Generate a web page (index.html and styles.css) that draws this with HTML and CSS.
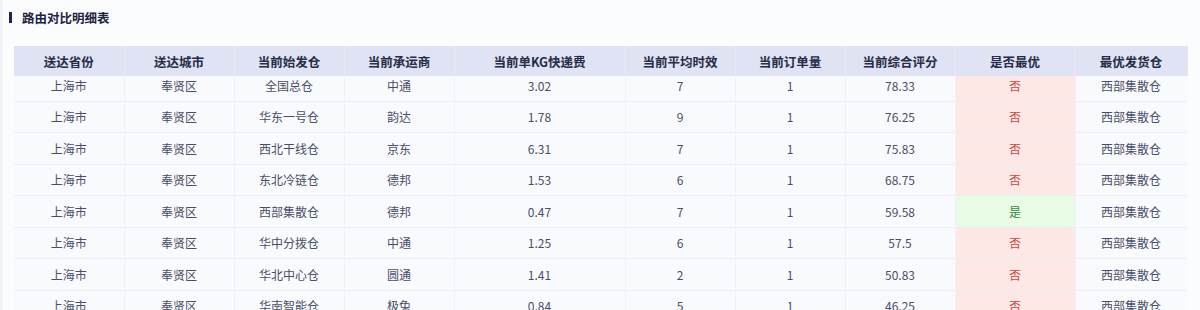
FILE: index.html
```html
<!DOCTYPE html>
<html lang="zh">
<head>
<meta charset="utf-8">
<title>路由对比明细表</title>
<link rel="stylesheet" href="styles.css">
</head>
<body>
<div class="card">
  <div class="title"><span class="title-bar"></span><span class="title-text">路由对比明细表</span></div>
  <div class="table-wrap">
    <table class="grid head">
      <colgroup>
        <col class="c1"><col class="c2"><col class="c3"><col class="c4"><col class="c5"><col class="c6"><col class="c7"><col class="c8"><col class="c9"><col class="c10">
      </colgroup>
      <thead>
        <tr>
          <th>送达省份</th><th>送达城市</th><th>当前始发仓</th><th>当前承运商</th><th>当前单KG快递费</th><th>当前平均时效</th><th>当前订单量</th><th>当前综合评分</th><th>是否最优</th><th>最优发货仓</th>
        </tr>
      </thead>
    </table>
    <div class="body-scroll">
      <table class="grid body">
        <colgroup>
          <col class="c1"><col class="c2"><col class="c3"><col class="c4"><col class="c5"><col class="c6"><col class="c7"><col class="c8"><col class="c9"><col class="c10">
        </colgroup>
        <tbody>
          <tr><td>上海市</td><td>奉贤区</td><td>全国总仓</td><td>中通</td><td>3.02</td><td>7</td><td>1</td><td>78.33</td><td class="no">否</td><td>西部集散仓</td></tr>
          <tr><td>上海市</td><td>奉贤区</td><td>华东一号仓</td><td>韵达</td><td>1.78</td><td>9</td><td>1</td><td>76.25</td><td class="no">否</td><td>西部集散仓</td></tr>
          <tr><td>上海市</td><td>奉贤区</td><td>西北干线仓</td><td>京东</td><td>6.31</td><td>7</td><td>1</td><td>75.83</td><td class="no">否</td><td>西部集散仓</td></tr>
          <tr><td>上海市</td><td>奉贤区</td><td>东北冷链仓</td><td>德邦</td><td>1.53</td><td>6</td><td>1</td><td>68.75</td><td class="no">否</td><td>西部集散仓</td></tr>
          <tr><td>上海市</td><td>奉贤区</td><td>西部集散仓</td><td>德邦</td><td>0.47</td><td>7</td><td>1</td><td>59.58</td><td class="yes">是</td><td>西部集散仓</td></tr>
          <tr><td>上海市</td><td>奉贤区</td><td>华中分拨仓</td><td>中通</td><td>1.25</td><td>6</td><td>1</td><td>57.5</td><td class="no">否</td><td>西部集散仓</td></tr>
          <tr><td>上海市</td><td>奉贤区</td><td>华北中心仓</td><td>圆通</td><td>1.41</td><td>2</td><td>1</td><td>50.83</td><td class="no">否</td><td>西部集散仓</td></tr>
          <tr><td>上海市</td><td>奉贤区</td><td>华南智能仓</td><td>极兔</td><td>0.84</td><td>5</td><td>1</td><td>46.25</td><td class="no">否</td><td>西部集散仓</td></tr>
        </tbody>
      </table>
    </div>
  </div>
</div>
</body>
</html>
```

FILE: styles.css
```css
html, body {
  margin: 0;
  padding: 0;
  background: #f3f4f8;
  height: 100%;
  overflow: hidden;
}

body {
  font-family: "Noto Sans CJK SC", "Noto Sans", "Liberation Sans", sans-serif;
}

.card {
  margin-left: 3px;
  background: #fbfcfe;
  height: 310px;
  padding: 12px 0 0 6px;
  box-sizing: border-box;
}

.title {
  display: flex;
  align-items: center;
  height: 11px;
}

.title-bar {
  width: 3px;
  height: 11px;
  background: #1f2550;
  margin-right: 10px;
}

.title-text {
  font-size: 12.5px;
  font-weight: 700;
  color: #1f2342;
  line-height: 11px;
}

.table-wrap {
  margin-top: 23px;
  margin-left: 5px;
  width: 1173px;
}

.grid {
  border-collapse: collapse;
  table-layout: fixed;
  width: 1173px;
}

.c1, .c2, .c3, .c4, .c6, .c7, .c8 { width: 110px; }
.c5 { width: 171px; }
.c9 { width: 120px; }
.c10 { width: 112px; }

.head th {
  height: 30px;
  padding: 0;
  background: #dfe3f3;
  color: #262b48;
  font-size: 12.5px;
  font-weight: 700;
  text-align: center;
  border-right: 1px solid #e8ebf6;
}

.head th:last-child {
  border-right: 1px solid #e3e7f4;
}

.body-scroll {
  height: 240px;
  overflow: hidden;
}

.body {
  margin-top: -6.5px;
}

.body td {
  height: 31.5px;
  box-sizing: border-box;
  padding: 0;
  background: #f9fafd;
  color: #4a4e68;
  font-size: 12px;
  text-align: center;
  border-bottom: 1px solid #eceef5;
  border-right: 1px solid #f1f2f8;
}

.body td:last-child {
  border-right: 1px solid #eceef6;
}

.body td.no {
  background: #fde8e5;
  color: #d0453d;
}

.body td.yes {
  background: #e7fbe5;
  color: #3b8a3f;
}
```
